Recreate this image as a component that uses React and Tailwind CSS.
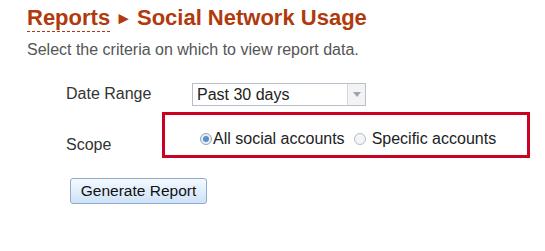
export default function App() {
  return (
    <div className="w-[545px] h-[251px] bg-white pl-[27px] pt-[4px] font-['Liberation_Sans',Arial,sans-serif]">
      <h1 className="text-[22px] leading-[28px] font-bold text-[#b03a0c]">
        <span className="border-b border-dashed border-[#b03a0c] pb-[1px]">Reports</span>
        <span className="text-[17px] mx-[5px] relative -top-[1px]">►</span>
        Social Network Usage
      </h1>
      <p className="mt-[7px] text-[16px] leading-[18px] text-[#555555]">
        Select the criteria on which to view report data.
      </p>

      <div className="mt-[24px] pl-[39px]">
        <div className="flex items-center h-[22px]">
          <div className="w-[126px] text-[16px] text-[#333333]">Date Range</div>
          <div className="flex w-[174px] h-[23px] border border-[#b7bfcc] bg-white">
            <div className="flex-1 px-[4px] text-[16px] leading-[21px] text-[#222222]">Past 30 days</div>
            <div className="w-[18px] border-l border-[#d4d8de] bg-[#f3f3f3] flex items-center justify-center">
              <svg width="8" height="5" viewBox="0 0 8 5">
                <path d="M0 0 L8 0 L4 5 Z" fill="#9aa6b6" />
              </svg>
            </div>
          </div>
        </div>

        <div className="flex items-center mt-[7px]">
          <div className="w-[96px] text-[16px] text-[#333333] pt-[19px]">Scope</div>
          <div className="w-[368px] h-[46px] border-[3px] border-[#cc0022] flex items-center pl-[35px] pt-[8px] text-[16px] text-[#222222]">
            <span className="w-[12px] h-[12px] rounded-full border border-[#8fa6c0] bg-[#e8eef6] flex items-center justify-center mr-[1px]">
              <span className="w-[6px] h-[6px] rounded-full bg-[#5b8fc6]" />
            </span>
            <span>All social accounts</span>
            <span className="w-[12px] h-[12px] rounded-full border border-[#b5bcc6] bg-[#f2f4f7] ml-[9px] mr-[6px]" />
            <span>Specific accounts</span>
          </div>
        </div>

        <button className="block mt-[20px] ml-[4px] h-[26px] w-[137px] rounded-[3px] border border-[#8eabcb] bg-gradient-to-b from-[#f4f9ff] to-[#cfe2f7] text-[15.5px] text-[#111111] leading-[22px]">
          Generate Report
        </button>
      </div>
    </div>
  )
}
